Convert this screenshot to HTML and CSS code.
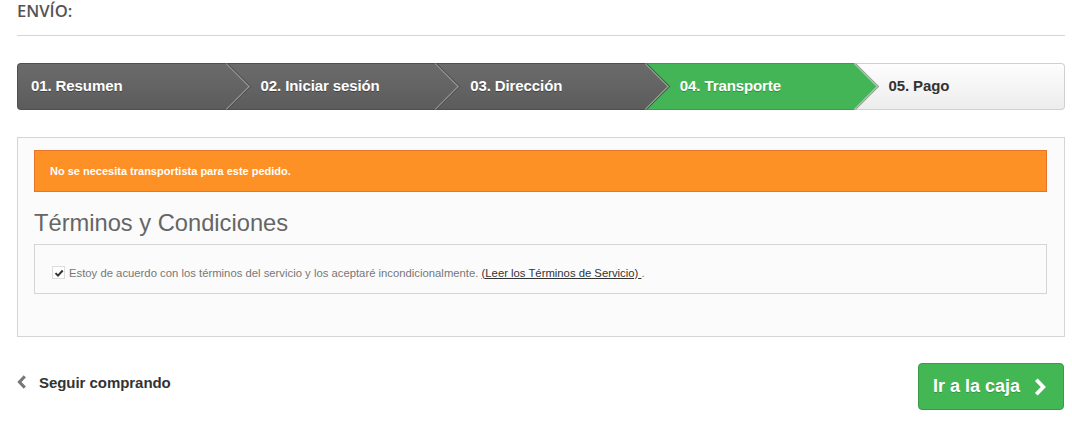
FILE: index.html
```html
<!DOCTYPE html>
<html lang="es">
<head>
<meta charset="utf-8">
<title>Envío</title>
<link rel="stylesheet" href="styles.css">
</head>
<body>
<div class="page">
  <h1 class="page-heading">Envío:</h1>

  <ol class="steps">
    <li class="step done first"><span>01. Resumen</span></li>
    <li class="step done"><span>02. Iniciar sesión</span></li>
    <li class="step done"><span>03. Dirección</span></li>
    <li class="step current"><span>04. Transporte</span></li>
    <li class="step todo last"><span>05. Pago</span></li>
  </ol>

  <div class="order-box">
    <p class="alert">No se necesita transportista para este pedido.</p>
    <h2 class="terms-title">Términos y Condiciones</h2>
    <div class="terms-box">
      <label class="terms-label">
        <span class="checkbox"><svg viewBox="0 0 10 10" width="10" height="10"><path d="M1.5 5.1 L4 7.6 L8.7 2.5" fill="none" stroke="#333" stroke-width="2"/></svg></span>
        <span>Estoy de acuerdo con los términos del servicio y los aceptaré incondicionalmente. <a href="#" class="terms-link">(Leer los Términos de Servicio)&nbsp;</a>.</span>
      </label>
    </div>
  </div>

  <div class="cart-nav">
    <a href="#" class="back-link">
      <svg class="back-icon" viewBox="0 0 10 14" width="10" height="14"><path d="M7.8 1.4 L2.4 7 L7.8 12.6" fill="none" stroke="#777" stroke-width="3"/></svg>
      <span>Seguir comprando</span>
    </a>
    <a href="#" class="btn-checkout">
      <span>Ir a la caja</span>
      <svg class="next-icon" viewBox="0 0 14 20" width="14" height="20"><path d="M3.3 2.8 L10.3 10 L3.3 17.2" fill="none" stroke="#fff" stroke-width="3.8"/></svg>
    </a>
  </div>
</div>
</body>
</html>
```

FILE: styles.css
```css
* { box-sizing: border-box; }

html, body {
  margin: 0;
  padding: 0;
  background: #fff;
}

body {
  font-family: "Liberation Sans", Arial, sans-serif;
  color: #777;
}

.page {
  padding: 0 7px 0 17px;
}

.page-heading {
  margin: 0;
  padding: 0 0 14px;
  font-family: "Open Sans", sans-serif;
  font-weight: 600;
  font-size: 16.6px;
  line-height: 21px;
  text-transform: uppercase;
  color: #555454;
  border-bottom: 1px solid #d6d4d4;
}

/* Steps */
.steps {
  list-style: none;
  margin: 27px 0 0;
  padding: 0;
  display: grid;
  grid-template-columns: repeat(5, 1fr);
  height: 47px;
}

.step {
  position: relative;
  display: flex;
  align-items: center;
  padding-left: 34px;
  padding-bottom: 2px;
  font-size: 15px;
  font-weight: bold;
  letter-spacing: -0.1px;
  border-top: 1px solid;
  border-bottom: 1px solid;
}

.step.first {
  padding-left: 13px;
  border-left: 1px solid;
  border-radius: 4px 0 0 4px;
}

.step.last {
  padding-left: 33px;
  border-right: 1px solid;
  border-radius: 0 4px 4px 0;
}

.step::after {
  content: "";
  position: absolute;
  top: 6px;
  right: -16px;
  width: 32px;
  height: 32px;
  transform: rotate(45deg);
  border-top: 1px solid;
  border-right: 1px solid;
  z-index: 2;
}

.step.last::after { display: none; }

.step.done {
  background: linear-gradient(#6b6b6b, #5c5c5c);
  border-color: #4f4f4f;
  color: #fff;
  text-shadow: 0 1px 0 rgba(0, 0, 0, 0.35);
}

.step.done::after {
  background: linear-gradient(135deg, #6b6b6b, #5c5c5c);
  border-color: #9b9b9b;
  box-shadow: 1px -1px 0 #4f4f4f;
}

.step.current {
  background: #44b556;
  border-color: #3a9d4b;
  color: #fff;
  text-shadow: 0 1px 0 rgba(0, 0, 0, 0.25);
}

.step.current::after {
  background: #44b556;
  border-color: #a9dbb0;
  box-shadow: 1px -1px 0 #9a9a9a;
}

.step.todo {
  background: linear-gradient(#fdfdfd, #ededed);
  border-color: #d0d0d0;
  color: #333;
}

/* Order box */
.order-box {
  margin-top: 27px;
  padding: 12px 17px 42px 16px;
  background: #fbfbfb;
  border: 1px solid #d6d4d4;
}

.alert {
  margin: 0;
  padding: 0 15px;
  height: 42px;
  display: flex;
  align-items: center;
  background: #fe9126;
  border: 1px solid #e4752b;
  color: #fff;
  font-size: 11px;
  font-weight: bold;
}

.terms-title {
  margin: 16px 0 0;
  font-size: 23.7px;
  line-height: 30px;
  font-weight: normal;
  color: #666;
}

.terms-box {
  margin-top: 6px;
  height: 50px;
  padding: 0 17px;
  border: 1px solid #d6d4d4;
  display: flex;
  align-items: center;
}

.terms-label {
  display: flex;
  align-items: center;
  gap: 4px;
  font-size: 11.3px;
  color: #777;
  padding-top: 7px;
}

.checkbox {
  width: 13px;
  height: 13px;
  border: 1px solid #ddd;
  background: #fff;
  display: inline-flex;
  align-items: center;
  justify-content: center;
}

.terms-link {
  color: #333;
  text-decoration: underline;
}

/* Bottom nav */
.cart-nav {
  margin-top: 26px;
  display: flex;
  justify-content: space-between;
  align-items: center;
  padding-right: 1px;
}

.back-link {
  display: flex;
  align-items: center;
  gap: 12px;
  color: #333;
  font-size: 15px;
  font-weight: bold;
  letter-spacing: -0.05px;
  text-decoration: none;
  padding-bottom: 9px;
}

.btn-checkout {
  display: flex;
  align-items: center;
  gap: 13px;
  height: 47px;
  padding: 0 16px 0 14px;
  background: #43b754;
  border: 1px solid #399a49;
  border-radius: 4px;
  color: #fff;
  font-size: 18px;
  font-weight: bold;
  text-decoration: none;
  text-shadow: 0 1px 0 rgba(0, 0, 0, 0.2);
}
```
